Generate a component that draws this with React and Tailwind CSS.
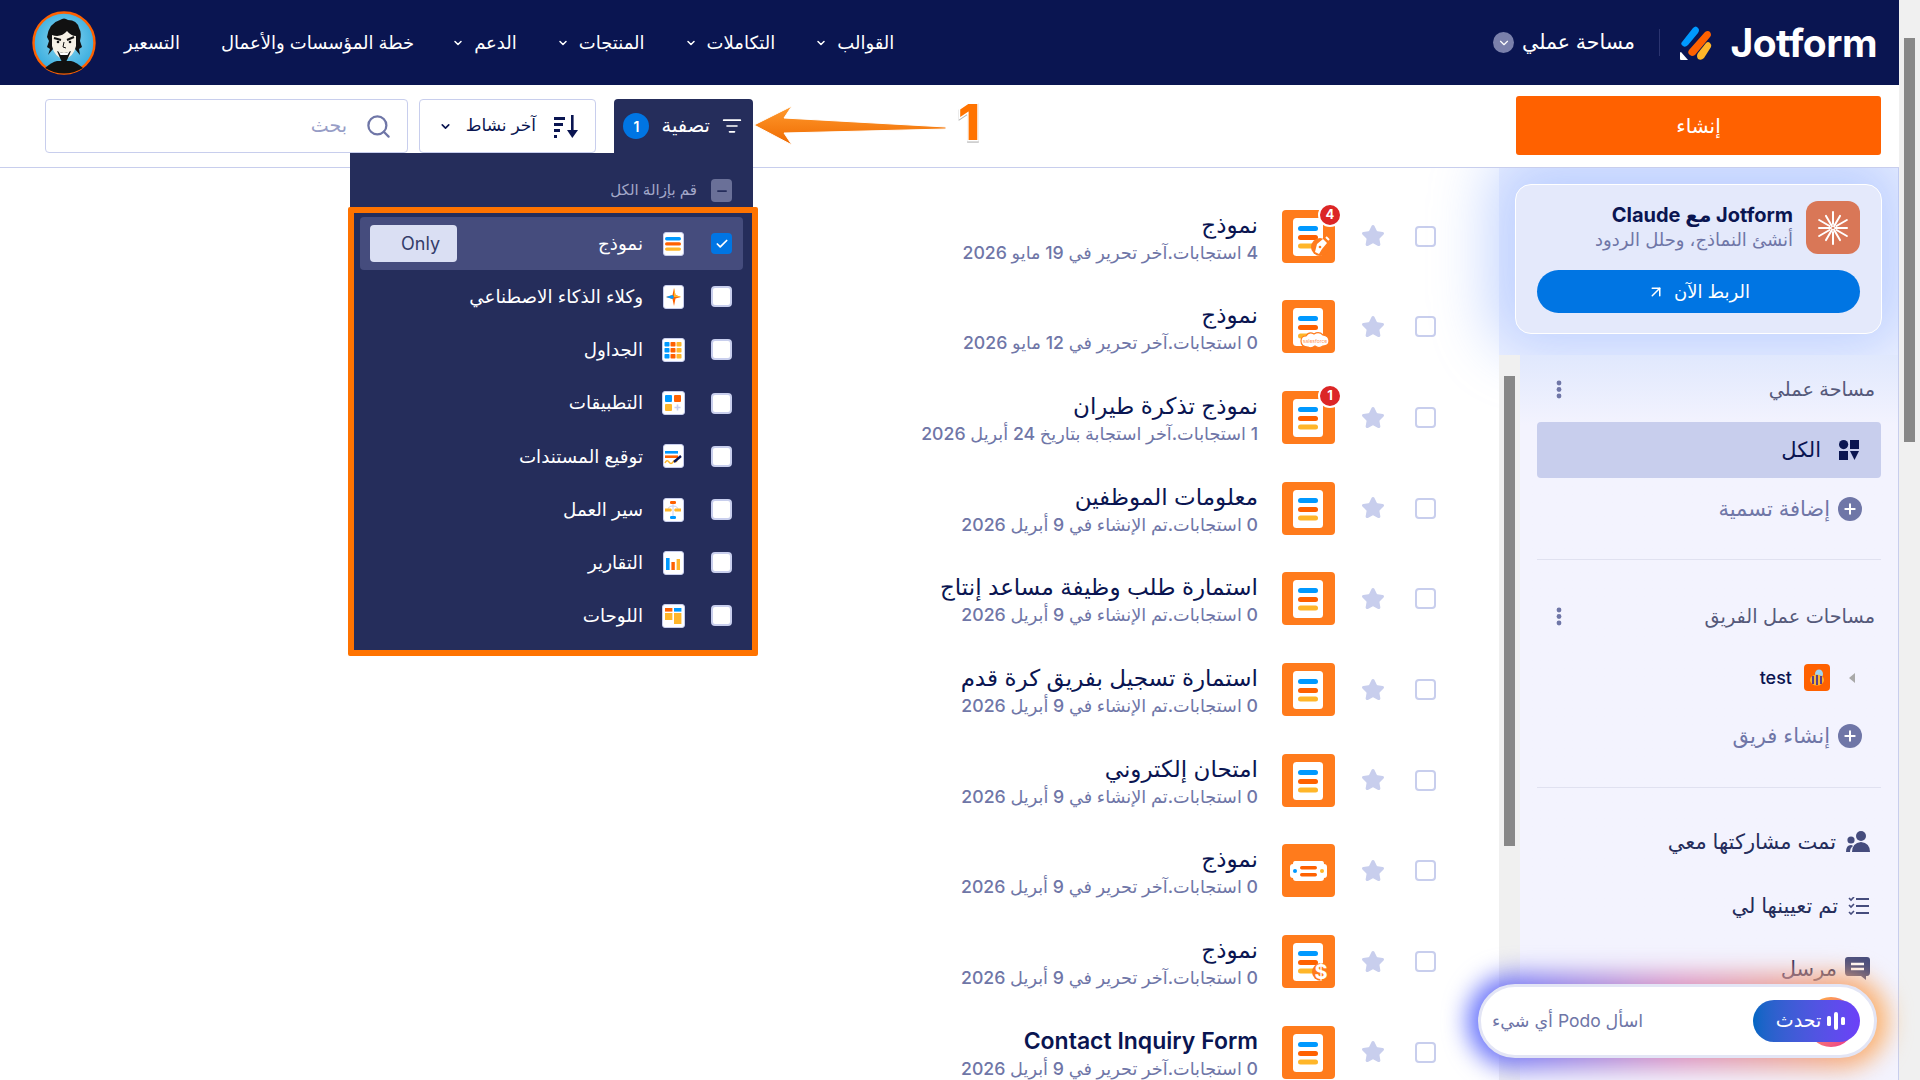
import React from 'react'
import { Search, ChevronDown, Plus, ArrowUpRight, Check, Minus, Star, ListFilter } from 'lucide-react'

const FONT = "font-['Inter','Noto_Sans','DejaVu_Sans',sans-serif]"

function JotformMark() {
  return (
    <svg width="32" height="36" viewBox="0 0 32 36">
      <path d="M2 17 L13 3 Q16 0 18 3 Q20 5 18 8 L8 20 Q5 23 3 21 Q0 19 2 17Z" fill="#0099ff" />
      <path d="M9 25 L25 7 Q28 5 30 7 Q32 10 30 12 L15 30 Q12 32 10 30 Q7 28 9 25Z" fill="#ff6100" />
      <path d="M18 28 L26 18 Q28 16 30 18 Q32 20 31 22 L24 33 Q21 36 18 34 Q16 31 18 28Z" fill="#ffb629" />
      <path d="M1 27 L8 35 L1 35 Q0 35 0 34 L0 28 Q0 27 1 27Z" fill="#fff" />
    </svg>
  )
}

function Avatar() {
  return (
    <svg width="64" height="64" viewBox="0 0 64 64">
      <defs>
        <radialGradient id="sky" cx="0.5" cy="0.45" r="0.6">
          <stop offset="0" stopColor="#8fd8f2" />
          <stop offset="1" stopColor="#2fa8dc" />
        </radialGradient>
      </defs>
      <circle cx="32" cy="32" r="30.5" fill="url(#sky)" stroke="#ff6100" strokeWidth="2.4" />
      <path d="M13 57 Q20 51 25 50 L39 50 Q44 51 51 57 Q42 62.5 32 62.5 Q22 62.5 13 57Z" fill="#111" />
      <path d="M16 44 L18 38 L15 36 L17 30 L15 26 Q17 12 28 9 Q32 6 36 9 Q45 9 47 17 Q50 22 48 30 L50 36 L47 38 L48 44 L43 38 L42 30 L22 30 L21 38Z" fill="#111" />
      <path d="M20 24 Q29 27 35 20 Q39 25 44 25 L44 35 Q42 45 32 49 Q22 45 20 35Z" fill="#f6f1e6" />
      <path d="M22 27 L29 29 M35 29 L42 26" stroke="#111" strokeWidth="2" />
      <circle cx="26" cy="31" r="1.3" fill="#111" />
      <circle cx="38" cy="31" r="1.3" fill="#111" />
      <path d="M32 31 L31 36 L34 37" stroke="#111" strokeWidth="1" fill="none" />
      <path d="M25 40 Q32 44 39 40 L36 47 L32 55 L28 47Z" fill="#111" />
      <path d="M26.5 40.5 Q32 43.5 37.5 40.5 L35.5 44 L28.5 44Z" fill="#fff" />
    </svg>
  )
}

function HeaderBar() {
  const nav = [
    ['القوالب', true],
    ['التكاملات', true],
    ['المنتجات', true],
    ['الدعم', true],
    ['خطة المؤسسات والأعمال', false],
  ]
  return (
    <header className="h-[85px] bg-[#0a1551] flex items-center pr-[22px] pl-[32px] shrink-0 text-white">
      <div className="flex items-center w-[197px] justify-between" dir="ltr">
        <JotformMark />
        <span className="text-[39px] font-bold tracking-[-0.5px] leading-none">Jotform</span>
      </div>
      <div className="w-px h-[27px] bg-[#2b3470] mr-[20px] ml-[24px]" />
      <div className="flex items-center gap-[8px] text-[20.5px]">
        <span>مساحة عملي</span>
        <span className="w-[21px] h-[21px] rounded-full bg-[#7a80ab] flex items-center justify-center">
          <ChevronDown size={14} />
        </span>
      </div>
      <nav className="mr-auto flex items-center h-full text-[18px] gap-[40px]">
        {nav.map(([t, caret]) => (
          <div key={t} className={`flex items-center gap-[10px] ${caret ? '' : 'mr-[-2px]'}`}>
            <span>{t}</span>
            {caret && <ChevronDown size={12} strokeWidth={3} />}
          </div>
        ))}
        <span className="mr-[1px]">التسعير</span>
        <div className="mr-[-12px]"><Avatar /></div>
      </nav>
    </header>
  )
}

function SortIcon() {
  return (
    <svg width="25" height="23" viewBox="0 0 25 23" fill="#0a1551">
      <rect x="0" y="2" width="11" height="3" />
      <rect x="0" y="8" width="9" height="3" />
      <rect x="0" y="14" width="6" height="3" />
      <rect x="0" y="20" width="3" height="3" />
      <rect x="17" y="0" width="2.6" height="18" />
      <path d="M13 15 H24 L18.3 23Z" />
    </svg>
  )
}

function Toolbar() {
  return (
    <div className="h-[83px] shrink-0 bg-white border-b border-[#c8ceed] flex items-start justify-between pr-[18px] pl-[45px] relative z-20">
      <button className="w-[365px] h-[59px] mt-[11px] bg-[#ff6100] rounded-[3px] text-white text-[20px]">إنشاء</button>
      <div className="flex mt-[14px] h-[54px]">
        <div className="w-[139px] h-[54px] bg-[#252d5b] rounded-t-[4px] flex items-center pr-[11px] gap-[12px] text-white text-[19.5px] shrink-0">
          <ListFilter size={20} />
          <span>تصفية</span>
          <span className="w-[26px] h-[26px] rounded-full bg-[#0075e3] flex items-center justify-center text-[14px] font-semibold">1</span>
        </div>
        <div className="w-[177px] h-[54px] mr-[18px] border border-[#c8ceed] rounded-[4px] flex items-center pr-[16px] text-[#0a1551] text-[17px] shrink-0">
          <SortIcon />
          <span className="mr-[18px]">آخر نشاط</span>
          <ChevronDown size={13} strokeWidth={3} className="mr-[14px]" />
        </div>
        <div className="w-[363px] h-[54px] mr-[11px] border border-[#c8ceed] rounded-[4px] flex items-center pr-[15px] text-[#979dc6] text-[19px] shrink-0">
          <Search size={27} className="text-[#6f76a7]" />
          <span className="mr-[18px]">بحث</span>
        </div>
      </div>
    </div>
  )
}

function MiniIcon({ children, wide }) {
  return (
    <span className={`flex items-center justify-center bg-white rounded-[3px] border border-[#c8ceed] h-[24px] shrink-0 ${wide ? 'w-[23px]' : 'w-[21px]'}`}>
      <svg width="18" height="20" viewBox="0 0 18 20">{children}</svg>
    </span>
  )
}

const B = '#0099ff'
const O = '#ff6100'
const Y = '#ffb629'

const FILTERS = [
  {
    label: 'نموذج',
    checked: true,
    icon: (
      <MiniIcon>
        <rect x="1" y="3" width="16" height="3.4" rx="1.7" fill={B} />
        <rect x="1" y="8.2" width="16" height="3.4" rx="1.7" fill={O} />
        <rect x="1" y="13.4" width="16" height="3.4" rx="1.7" fill={Y} />
      </MiniIcon>
    ),
  },
  {
    label: 'وكلاء الذكاء الاصطناعي',
    icon: (
      <MiniIcon>
        <path d="M10 1 L11.5 8 L17 10 L11.5 11.5 L10 19 L8.5 12 L2 10 L8.5 8Z" fill={O} />
        <path d="M10 1 L11.5 8 L17 10 L10 10Z" fill={Y} />
        <path d="M2 10 L8.5 8 L10 10 L8.5 12Z" fill={B} />
      </MiniIcon>
    ),
  },
  {
    label: 'الجداول',
    icon: (
      <MiniIcon wide>
        {[0, 1, 2].map(r => [B, O, Y].map((c, i) => (
          <rect key={`${r}${i}`} x={0.5 + i * 6} y={2 + r * 6} width="5" height="4.6" rx="0.8" fill={c} />
        )))}
      </MiniIcon>
    ),
  },
  {
    label: 'التطبيقات',
    icon: (
      <MiniIcon wide>
        <rect x="1" y="2" width="7" height="7" rx="1" fill={B} />
        <rect x="10" y="2" width="7" height="7" rx="1" fill={O} />
        <rect x="1" y="11" width="7" height="7" rx="1" fill={Y} />
        <path d="M13.5 11.5v6M10.5 14.5h6" stroke="#c8ceed" strokeWidth="1.6" />
      </MiniIcon>
    ),
  },
  {
    label: 'توقيع المستندات',
    icon: (
      <MiniIcon>
        <rect x="1" y="5" width="13" height="2.6" fill={B} />
        <rect x="1" y="9.4" width="13" height="2.6" fill={O} />
        <path d="M1 17 Q3 13 5 16 T9 16 T13 16" stroke={Y} strokeWidth="1.4" fill="none" />
        <path d="M10 16 L17 10" stroke="#0a1551" strokeWidth="2.4" />
      </MiniIcon>
    ),
  },
  {
    label: 'سير العمل',
    icon: (
      <MiniIcon>
        <path d="M9 4v12M4 10 Q4 6 9 6 Q14 6 14 10" stroke="#c8ceed" strokeWidth="1" fill="none" />
        <rect x="6" y="1" width="6" height="3" rx="1.2" fill={O} />
        <path d="M1 8.5h6l1 1.5-1 1.5H1z" fill={Y} />
        <path d="M17 8.5h-6l-1 1.5 1 1.5h6z" fill={Y} />
        <rect x="6" y="16" width="6" height="3" rx="1.2" fill={B} />
      </MiniIcon>
    ),
  },
  {
    label: 'التقارير',
    icon: (
      <MiniIcon>
        <rect x="2" y="5" width="3.6" height="12" fill={B} />
        <rect x="7.4" y="9" width="3.4" height="8" fill={O} />
        <rect x="12.6" y="6" width="3.4" height="11" fill={Y} />
      </MiniIcon>
    ),
  },
  {
    label: 'اللوحات',
    icon: (
      <MiniIcon wide>
        <rect x="1" y="2" width="7.4" height="3.6" fill={O} />
        <rect x="10" y="2" width="7.4" height="3.6" fill={B} />
        <rect x="1" y="7" width="7.4" height="7" fill={Y} />
        <rect x="10" y="7" width="7.4" height="11" fill={Y} />
      </MiniIcon>
    ),
  },
]

function FilterMenu() {
  return (
    <div dir="rtl" className="absolute z-30 top-[153px] left-[350px] w-[403px] h-[503px] bg-[#252d5b]">
      <div className="h-[64px] flex items-center gap-[14px] pr-[21px] pt-[11px] text-[#a3a8c9] text-[15px]">
        <span className="w-[21px] h-[23px] rounded-[4px] bg-[#6a7098] flex items-center justify-center text-[#252d5b]">
          <Minus size={14} strokeWidth={3} />
        </span>
        <span>قم بإزالة الكل</span>
      </div>
      <div className="mx-[10px] flex flex-col">
        {FILTERS.map(f => (
          <div key={f.label} className={`h-[53.2px] rounded-[4px] flex items-center pr-[11px] text-white text-[18.3px] ${f.checked ? 'bg-[#454c7d]' : ''}`}>
            {f.checked ? (
              <span className="w-[21px] h-[21px] rounded-[4px] bg-[#0075e3] flex items-center justify-center">
                <Check size={14} strokeWidth={3} />
              </span>
            ) : (
              <span className="w-[21px] h-[21px] rounded-[4px] bg-white border-2 border-[#c8ceed]" />
            )}
            <span className="w-[68px] flex justify-center pr-[8px] shrink-0">{f.icon}</span>
            <span>{f.label}</span>
            {f.checked && (
              <span className="mr-auto ml-[10px] w-[87px] h-[37px] rounded-[4px] bg-[#dadff3] text-[#343c6a] flex items-center pr-[17px] text-[18px]">Only</span>
            )}
          </div>
        ))}
      </div>
    </div>
  )
}

function Annotation() {
  return (
    <>
      <div className="absolute z-40 top-[207px] left-[348px] w-[410px] h-[449px] border-[6px] border-[#ff7300] rounded-[2px] pointer-events-none" />
      <svg className="absolute z-40 top-[100px] left-[750px]" width="200" height="50" viewBox="0 0 200 50">
        <defs>
          <linearGradient id="arrow" x1="0" y1="0" x2="0" y2="1">
            <stop offset="0" stopColor="#ff9a2e" />
            <stop offset="1" stopColor="#ef6a00" />
          </linearGradient>
        </defs>
        <path d="M4 25 L42 6 L34 18 L196 27 L196 29 L34 33 L42 45Z" fill="url(#arrow)" stroke="#fff" strokeWidth="1" />
      </svg>
      <span className="absolute z-40 top-[92px] left-[958px] text-[50px] leading-[60px] font-extrabold text-[#ff7300] [-webkit-text-stroke:3px_#fff] [paint-order:stroke_fill] [filter:drop-shadow(0_1px_0_#aaa)]">1</span>
    </>
  )
}

function FormIcon({ kind, badge }) {
  return (
    <span className="relative w-[53px] h-[53px] shrink-0">
      <svg width="53" height="53" viewBox="0 0 53 53">
        <rect width="53" height="53" rx="4" fill="#ff7b1c" />
        {kind === 'card' ? (
          <>
            <path d="M13 17 H40 Q42 17 42 20 Q45 20 45 23 V31 Q45 34 42 34 Q42 37 39 37 H14 Q11 37 11 34 Q8 34 8 31 V23 Q8 20 11 20 Q11 17 13 17Z" fill="#fff" />
            <rect x="18" y="22" width="17" height="3.4" rx="1.7" fill={O} />
            <rect x="18" y="29" width="17" height="3.4" rx="1.7" fill={O} />
            <circle cx="13" cy="27" r="2" fill={B} />
            <circle cx="40" cy="27" r="2" fill={Y} />
          </>
        ) : (
          <>
            <rect x="11" y="8" width="30" height="38" rx="3.5" fill="#fff" />
            <rect x="16" y="16" width="20" height="5" rx="2.5" fill={B} />
            <rect x="16" y="25" width="20" height="5" rx="2.5" fill={O} />
            <rect x="16" y="33.5" width="20" height="5" rx="2.5" fill={Y} />
          </>
        )}
        {kind === 'pen' && (
          <>
            <circle cx="38" cy="37" r="9" fill="#ff7b1c" />
            <path d="M37 44 L33 42 L35 34 L41 29 L45 33 L40 39Z" fill="#fff" />
            <circle cx="38" cy="37" r="1.3" fill="#ff7b1c" />
            <path d="M44 27 L47 30" stroke="#fff" strokeWidth="2" />
          </>
        )}
        {kind === 'cloud' && (
          <>
            <path d="M26 47 Q19 47 19 41 Q19 36 24 36 Q27 31 32 34 Q37 31 41 35 Q47 36 47 41 Q47 46 41 46 Q37 49 33 46 Q29 49 26 47Z" fill="#fff" stroke="#ff7b1c" strokeWidth="1.2" />
            <text x="33" y="42.5" textAnchor="middle" fontSize="5" fill="#ff9a5c" fontFamily="Inter">salesforce</text>
          </>
        )}
        {kind === 'dollar' && (
          <>
            <circle cx="39" cy="37" r="9" fill="#ff7b1c" />
            <text x="39" y="44" textAnchor="middle" fontSize="20" fontWeight="700" fill="#fff" fontFamily="Inter">$</text>
          </>
        )}
      </svg>
      {badge && (
        <span className="absolute top-[-7px] right-[-7px] w-[24px] h-[24px] rounded-full bg-[#dc2626] border-2 border-white text-white text-[13px] font-bold flex items-center justify-center">{badge}</span>
      )}
    </span>
  )
}

const FORMS = [
  { title: 'نموذج', sub: '4 استجابات.آخر تحرير في 19 مايو 2026', kind: 'pen', badge: '4' },
  { title: 'نموذج', sub: '0 استجابات.آخر تحرير في 12 مايو 2026', kind: 'cloud' },
  { title: 'نموذج تذكرة طيران', sub: '1 استجابات.آخر استجابة بتاريخ 24 أبريل 2026', badge: '1' },
  { title: 'معلومات الموظفين', sub: '0 استجابات.تم الإنشاء في 9 أبريل 2026' },
  { title: 'استمارة طلب وظيفة مساعد إنتاج', sub: '0 استجابات.تم الإنشاء في 9 أبريل 2026' },
  { title: 'استمارة تسجيل بفريق كرة قدم', sub: '0 استجابات.تم الإنشاء في 9 أبريل 2026' },
  { title: 'امتحان إلكتروني', sub: '0 استجابات.تم الإنشاء في 9 أبريل 2026' },
  { title: 'نموذج', sub: '0 استجابات.آخر تحرير في 9 أبريل 2026', kind: 'card' },
  { title: 'نموذج', sub: '0 استجابات.آخر تحرير في 9 أبريل 2026', kind: 'dollar' },
  { title: 'Contact Inquiry Form', sub: '0 استجابات.آخر تحرير في 9 أبريل 2026', latin: true },
]

function FormRow({ title, sub, kind, badge, latin }) {
  return (
    <div className="h-[90.67px] shrink-0 flex items-center pr-[63px]">
      <span className="w-[21px] h-[21px] rounded-[4px] border-2 border-[#c8ceed] shrink-0" />
      <Star size={24} className="text-[#c8ceed] fill-[#c8ceed] mr-[30px] shrink-0" />
      <span className="mr-[26px] flex"><FormIcon kind={kind} badge={badge} /></span>
      <div className="mr-[24px] pt-[3px] gap-[2px] flex flex-col">
        <span className={`text-[#0a1551] text-[23px] leading-[28px] ${latin ? 'font-semibold' : ''}`}>{title}</span>
        <span className="text-[#6f76a7] text-[17.7px] leading-[24px] font-medium">{sub}</span>
      </div>
    </div>
  )
}

function ClaudeStar() {
  const rays = [0, 30, 60, 90, 120, 150, 180, 210, 240, 270, 300, 330]
  return (
    <svg width="34" height="34" viewBox="0 0 34 34">
      {rays.map((r, i) => (
        <rect key={r} x="16" y={i % 2 ? 2 : 0} width="2" height="14" rx="1" fill="#fff" transform={`rotate(${r} 17 17)`} />
      ))}
    </svg>
  )
}

function ClaudeCard() {
  return (
    <div className="h-[187px] shrink-0 relative pt-[16px] pr-[16px] bg-[#eef2ff]">
      <div className="w-[367px] h-[150px] rounded-[16px] border border-white bg-[#e4e9fb] shadow-[0_-8px_60px_24px_rgba(175,198,255,0.75)] pt-[16px] px-[21px]">
        <div className="flex items-center gap-[13px]">
          <span className="w-[54px] h-[53px] rounded-[12px] bg-[#d97757] flex items-center justify-center">
            <ClaudeStar />
          </span>
          <div className="flex flex-col">
            <span className="text-[#0a1551] text-[20px] font-bold leading-[26px] mt-[-2px]">Jotform مع Claude</span>
            <span className="text-[#6f76a7] text-[18px] leading-[24px]">أنشئ النماذج، وحلل الردود</span>
          </div>
        </div>
        <button className="mt-[16px] w-full h-[43px] rounded-full bg-[#0075e3] text-white text-[18px] flex items-center justify-center gap-[9px]">
          <span>الربط الآن</span>
          <ArrowUpRight size={18} />
        </button>
      </div>
    </div>
  )
}

function Dots() {
  return (
    <svg width="6" height="19" viewBox="0 0 6 19" fill="#6f76a7">
      <circle cx="3" cy="3" r="2.4" />
      <circle cx="3" cy="9.5" r="2.4" />
      <circle cx="3" cy="16" r="2.4" />
    </svg>
  )
}

function SideHeading({ children, top }) {
  return (
    <div className={`flex items-center justify-between pr-[23px] pl-[36px] text-[#55597a] text-[19.3px] ${top}`}>
      <span>{children}</span>
      <Dots />
    </div>
  )
}

function AddRow({ children, top }) {
  return (
    <div className={`flex items-center gap-[8px] pr-[36px] text-[#6f76a7] text-[21px] ${top}`}>
      <span className="w-[24px] h-[24px] rounded-full bg-[#6f76a7] flex items-center justify-center text-white">
        <Plus size={16} strokeWidth={3} />
      </span>
      <span>{children}</span>
    </div>
  )
}

function SideNav() {
  return (
    <div className="flex-1 bg-gradient-to-b from-[#e0e8fd] to-[#f3f3fe] to-[70px] relative">
      <div className="pt-[20px]">
        <SideHeading>مساحة عملي</SideHeading>
        <div className="mx-[17px] mt-[18px] h-[56px] rounded-[4px] bg-[#c8ceed] flex items-center pr-[22px] gap-[18px] text-[#0a1551] text-[21px]">
          <svg width="20" height="20" viewBox="0 0 20 20" fill="#0a1551">
            <circle cx="4.6" cy="4.6" r="4.6" />
            <rect x="11" y="0" width="9" height="9" />
            <rect x="0" y="11" width="9" height="9" />
            <path d="M11 11 H20 L15.5 20Z" />
          </svg>
          <span>الكل</span>
        </div>
        <AddRow top="mt-[15px]">إضافة تسمية</AddRow>
        <div className="mx-[17px] mt-[35px] h-px bg-[#e0e1f0]" />
        <SideHeading top="mt-[42px]">مساحات عمل الفريق</SideHeading>
        <div className="flex items-center mt-[33px] pr-[43px] text-[#0a1551] text-[18px] font-medium">
          <span className="w-0 h-0 border-y-[5px] border-y-transparent border-r-[6px] border-r-[#a9a9a9] ml-[19px]" />
          <span className="w-[26px] h-[27px] rounded-[4px] bg-[#ff6100] flex items-center justify-center">
            <svg width="16" height="18" viewBox="0 0 16 18">
              <ellipse cx="10" cy="5" rx="4" ry="4.5" fill="#9fd3f0" />
              <ellipse cx="8" cy="11" rx="7" ry="5.5" fill="#f7b733" />
              <path d="M4 7v8M8 6v10M12 7v8" stroke="#5a3d8a" strokeWidth="2" />
            </svg>
          </span>
          <span className="mr-[12px]">test</span>
        </div>
        <AddRow top="mt-[29px]">إنشاء فريق</AddRow>
        <div className="mx-[17px] mt-[35px] h-px bg-[#e0e1f0]" />
        <div className="flex flex-col text-[#252d5b] text-[21px] pr-[28px] mt-[40px]">
          <div className="flex items-center h-[28px] gap-[10px]">
            <svg width="24" height="21" viewBox="0 0 24 21" fill="#454c7d">
              <circle cx="15" cy="5" r="5" />
              <path d="M6 21 Q6 12 15 11 Q24 12 24 21Z" />
              <circle cx="5" cy="9" r="3.6" />
              <path d="M0 21 Q0 14 5 14 Q6 14 7 15 Q4 17 4 21Z" />
            </svg>
            <span>تمت مشاركتها معي</span>
          </div>
          <div className="flex items-center h-[28px] gap-[10px] mt-[36px]">
            <svg width="22" height="18" viewBox="0 0 22 18" fill="none" stroke="#454c7d" strokeWidth="2">
              <path d="M8 2 H21 M8 9 H21 M8 16 H21" />
              <path d="M1 1 L3 3 L6 0 M1 8 L3 10 L6 7 M1 15 L3 17 L6 14" strokeWidth="1.6" />
            </svg>
            <span>تم تعيينها لي</span>
          </div>
          <div className="flex items-center h-[28px] gap-[8px] mt-[35px]">
            <svg width="25" height="23" viewBox="0 0 25 23">
              <path d="M3 0 H22 Q25 0 25 3 V15 Q25 19 22 19 H21 V23 L16 19 H3 Q0 19 0 15 V3 Q0 0 3 0Z" fill="#454c7d" />
              <path d="M6 7 H19 M6 12 H19" stroke="#fff" strokeWidth="2.4" />
            </svg>
            <span>مرسل</span>
          </div>
        </div>
      </div>
    </div>
  )
}

function PodoBar() {
  return (
    <div className="absolute z-30 left-[1478px] top-[984px] w-[399px] h-[74px]">
      <div className="absolute -inset-[10px] rounded-full blur-[12px] bg-gradient-to-r from-[#5b6cff] via-[#d98fc0] to-[#ffb05c]" />
      <div className="absolute inset-0 rounded-full bg-white border-[3px] border-[#e3e5f5] flex items-center justify-between pl-[11px] pr-[14px]" dir="ltr">
        <span className="text-[#6f76a7] text-[17.5px]" dir="rtl">اسأل Podo أي شيء</span>
        <div className="relative">
          <span className="absolute right-[5px] top-[-3px] w-[48px] h-[50px] rounded-full bg-gradient-to-br from-[#ffb629] to-[#e91e8c]" />
          <button className="relative w-[107px] h-[42px] rounded-full bg-gradient-to-r from-[#0066c3] to-[#6c40f8] text-white text-[19px] flex items-center justify-center gap-[6px] pl-[8px]" dir="rtl">
            <svg width="18" height="18" viewBox="0 0 18 18" fill="#fff">
              <rect x="0" y="4" width="4" height="10" rx="1.5" />
              <rect x="7" y="0" width="4" height="18" rx="2" />
              <rect x="14" y="5" width="4" height="8" rx="1.5" />
            </svg>
            <span>تحدث</span>
          </button>
        </div>
      </div>
    </div>
  )
}

export default function App() {
  return (
    <div className={`h-screen flex overflow-hidden bg-white ${FONT}`}>
      <div className="w-[1899px] h-full flex flex-col" dir="rtl">
        <HeaderBar />
        <Toolbar />
        <div className="flex-1 flex min-h-0">
          <aside className="w-[400px] shrink-0 flex flex-col border-r border-[#c8ceed]">
            <ClaudeCard />
            <div className="flex-1 flex min-h-0 relative z-10">
              <SideNav />
              <div className="w-[21px] shrink-0 bg-[#f0f0f0] relative">
                <div className="absolute top-[21px] left-[5px] w-[11px] h-[470px] bg-[#888]" />
              </div>
            </div>
          </aside>
          <main className="flex-1 min-w-0 overflow-hidden pt-[23px] bg-transparent">
            {FORMS.map((f, i) => <FormRow key={i} {...f} />)}
          </main>
        </div>
      </div>
      <div className="w-[21px] h-full bg-[#f0f0f0] relative shrink-0">
        <div className="absolute top-[38px] left-[5px] w-[11px] h-[404px] bg-[#888]" />
      </div>
      <FilterMenu />
      <Annotation />
      <PodoBar />
    </div>
  )
}
